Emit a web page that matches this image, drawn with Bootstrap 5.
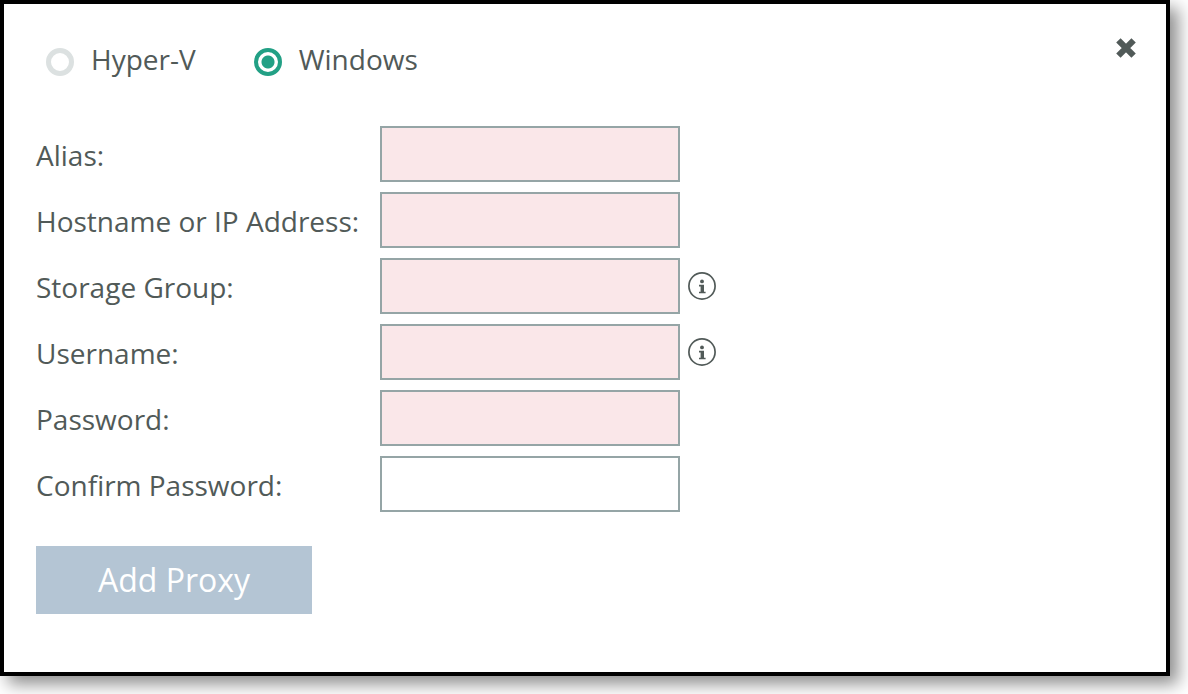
<!DOCTYPE html>
<html lang="en">
<head>
<meta charset="utf-8">
<meta name="viewport" content="width=device-width, initial-scale=1">
<title>Add Proxy</title>
<link href="https://cdn.jsdelivr.net/npm/bootstrap@5.3.0/dist/css/bootstrap.min.css" rel="stylesheet">
<style>
  body { background: #fff; color: #515a58; font-family: "Open Sans", "Noto Sans", sans-serif; font-size: 28px; line-height: 40px; }
  .dialog-page { min-height: 100vh; padding: 0 18px 18px 0; }
  .proxy-dialog { background: #fff; border: 4px solid #000; box-shadow: 8px 8px 16px rgba(0, 0, 0, .45); padding: 32px 28px 54px 32px; }
  .type-choices { gap: 58px; padding: 3px 0 0 10px; }
  .type-choice { gap: 17px; }
  .type-choice .form-check-input { float: none; width: 28px; height: 28px; margin: 6px 0 0; border: 5px solid #dce1e1; background: #fff; box-shadow: none; }
  .type-choice .form-check-input:checked { border: 4px solid #22a085; background: radial-gradient(circle, #22a085 0 6px, #fff 7px); background-origin: border-box; }
  .close-btn { width: 24px; height: 24px; color: #515a58; }
  .proxy-fields { margin-top: 47px; gap: 10px; }
  .field-row { column-gap: 8px; }
  .field-label { width: 336px; padding-top: 2px; }
  .field-input { width: 300px; height: 56px; border: 2px solid #95a5a6; border-radius: 0; font-size: 28px; color: inherit; }
  .field-input.required-empty { background: #fae7e9; }
  .info-btn { width: 28px; height: 28px; color: #515a58; }
  .add-btn, .add-btn:hover { width: 276px; height: 68px; margin-top: 34px; border-radius: 0; background: #b4c5d4; color: #fff; font-size: 32px; line-height: 44px; }
</style>
</head>
<body>
<div class="dialog-page d-flex">
  <main class="proxy-dialog flex-grow-1">
    <form>
      <div class="d-flex justify-content-between align-items-start">
        <div class="type-choices d-flex flex-wrap">
          <div class="type-choice d-flex align-items-center">
            <input class="form-check-input" type="radio" name="proxyType" id="hyperv">
            <label for="hyperv">Hyper-V</label>
          </div>
          <div class="type-choice d-flex align-items-center">
            <input class="form-check-input" type="radio" name="proxyType" id="windows" checked>
            <label for="windows">Windows</label>
          </div>
        </div>
        <button type="button" class="close-btn btn p-0 border-0 d-flex" aria-label="Close">
          <svg width="24" height="24" viewBox="0 0 24 24" aria-hidden="true"><path d="M4.4 4.4 19.6 19.6M19.6 4.4 4.4 19.6" fill="none" stroke="currentColor" stroke-width="6.2"/></svg>
        </button>
      </div>

      <div class="proxy-fields d-flex flex-column">
        <div class="field-row d-flex align-items-center">
          <label class="field-label" for="alias">Alias:</label>
          <input class="field-input required-empty form-control" type="text" id="alias">
        </div>
        <div class="field-row d-flex align-items-center">
          <label class="field-label" for="host">Hostname or IP Address:</label>
          <input class="field-input required-empty form-control" type="text" id="host">
        </div>
        <div class="field-row d-flex align-items-center">
          <label class="field-label" for="group">Storage Group:</label>
          <input class="field-input required-empty form-control" type="text" id="group">
          <button type="button" class="info-btn btn p-0 border-0 d-flex" aria-label="Storage group help">
            <svg width="28" height="28" viewBox="0 0 28 28" fill="currentColor" aria-hidden="true"><circle cx="14" cy="14" r="13.1" fill="none" stroke="currentColor" stroke-width="1.7"/><circle cx="14" cy="9.4" r="1.9"/><path d="M11 12.8h5v6.9h1.6v1.6H11v-1.6h1.6v-5.3H11z"/></svg>
          </button>
        </div>
        <div class="field-row d-flex align-items-center">
          <label class="field-label" for="user">Username:</label>
          <input class="field-input required-empty form-control" type="text" id="user">
          <button type="button" class="info-btn btn p-0 border-0 d-flex" aria-label="Username help">
            <svg width="28" height="28" viewBox="0 0 28 28" fill="currentColor" aria-hidden="true"><circle cx="14" cy="14" r="13.1" fill="none" stroke="currentColor" stroke-width="1.7"/><circle cx="14" cy="9.4" r="1.9"/><path d="M11 12.8h5v6.9h1.6v1.6H11v-1.6h1.6v-5.3H11z"/></svg>
          </button>
        </div>
        <div class="field-row d-flex align-items-center">
          <label class="field-label" for="pass">Password:</label>
          <input class="field-input required-empty form-control" type="password" id="pass">
        </div>
        <div class="field-row d-flex align-items-center">
          <label class="field-label" for="confirm">Confirm Password:</label>
          <input class="field-input form-control" type="password" id="confirm">
        </div>
      </div>

      <button type="submit" class="add-btn btn border-0">Add Proxy</button>
    </form>
  </main>
</div>
<script src="https://cdn.jsdelivr.net/npm/bootstrap@5.3.0/dist/js/bootstrap.bundle.min.js"></script>
</body>
</html>
